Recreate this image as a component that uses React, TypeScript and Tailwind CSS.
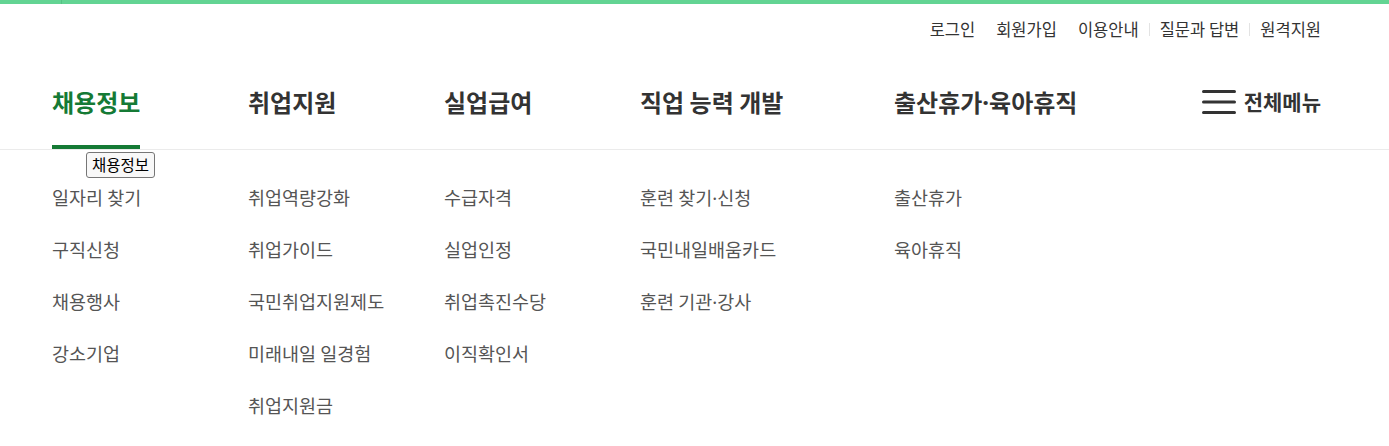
import React from 'react';

const font = { fontFamily: '"Noto Sans CJK KR", "Noto Sans", sans-serif' };

const navItems = [
  { label: '채용정보', width: 'w-[196px]', active: true },
  { label: '취업지원', width: 'w-[196px]' },
  { label: '실업급여', width: 'w-[196px]' },
  { label: '직업 능력 개발', width: 'w-[254px]' },
  { label: '출산휴가·육아휴직', width: 'w-[250px]' },
];

const subMenus = [
  ['일자리 찾기', '구직신청', '채용행사', '강소기업'],
  ['취업역량강화', '취업가이드', '국민취업지원제도', '미래내일 일경험', '취업지원금'],
  ['수급자격', '실업인정', '취업촉진수당', '이직확인서'],
  ['훈련 찾기·신청', '국민내일배움카드', '훈련 기관·강사'],
  ['출산휴가', '육아휴직'],
];

const utilLinks = [
  { label: '로그인' },
  { label: '회원가입' },
  { label: '이용안내' },
  { label: '질문과 답변', sep: true },
  { label: '원격지원', sep: true },
];

// the CJK font draws "·" full width; the reference uses a narrow dot
function Label({ text }: { text: string }) {
  const parts = text.split('·');
  return (
    <>
      {parts.map((p, i) => (
        <React.Fragment key={i}>
          {i > 0 && <span style={{ fontFamily: '"Noto Sans", sans-serif' }}>·</span>}
          {p}
        </React.Fragment>
      ))}
    </>
  );
}

function App() {
  return (
    <div className="relative min-h-screen bg-white" style={font}>
      <div className="flex h-[4px] bg-[#63d493]">
        <div className="w-[61px]" />
        <div className="w-px bg-[#55c285]" />
      </div>

      <div className="flex h-[50px] items-center justify-end pr-[68px] text-[16.5px] text-[#333]">
        {utilLinks.map((l, i) => (
          <div key={l.label} className="flex items-center">
            {i > 0 && (
              l.sep ? (
                <span className="mx-[10px] h-[13px] w-px bg-[#e3e3e3]" />
              ) : (
                <span className="w-[21px]" />
              )
            )}
            <span>{l.label}</span>
          </div>
        ))}
      </div>

      <div className="border-b border-[#ebebeb]">
        <div className="flex h-[95px] items-stretch pl-[52px] pr-[68px]">
          {navItems.map(n => (
            <div key={n.label} className={`${n.width} flex`}>
              <div
                className={
                  'flex items-center border-b-4 pt-1 text-[24px] font-bold ' +
                  (n.active ? 'border-[#157a35] text-[#157a35]' : 'border-transparent text-[#333]')
                }
              >
                <Label text={n.label} />
              </div>
            </div>
          ))}
          <div className="ml-auto flex items-center gap-[8px]">
            <svg width="34" height="26" viewBox="0 0 34 26">
              <rect x="0" y="1" width="34" height="3" rx="1.5" fill="#333" />
              <rect x="0" y="11.5" width="34" height="3" rx="1.5" fill="#333" />
              <rect x="0" y="22" width="34" height="3" rx="1.5" fill="#333" />
            </svg>
            <span className="text-[21px] font-bold text-[#333]">전체메뉴</span>
          </div>
        </div>
      </div>

      <div className="flex pl-[52px] pt-[21px] text-[18.5px] text-[#555]">
        {subMenus.map((col, i) => (
          <ul key={i} className={navItems[i].width}>
            {col.map(item => (
              <li key={item} className="h-[52px] leading-[52px]">
                <Label text={item} />
              </li>
            ))}
          </ul>
        ))}
      </div>

      <div className="absolute left-[86px] top-[152px] flex h-[26px] w-[69px] items-center justify-center rounded-[3px] border border-[#767676] bg-[#f8f8f8] text-[15.5px] text-black">
        채용정보
      </div>
    </div>
  );
}

export default App;
